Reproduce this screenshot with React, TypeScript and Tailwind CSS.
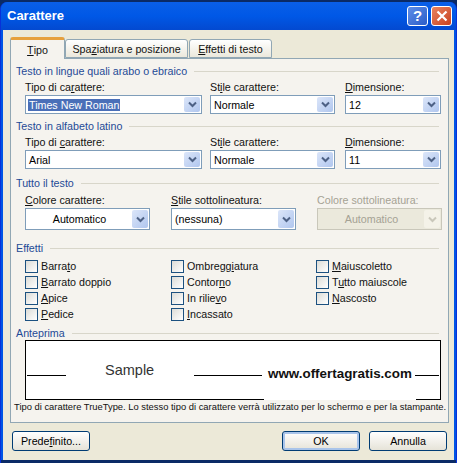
const font = { fontFamily: '"Liberation Sans", Arial, sans-serif' };

function Chevron({ disabled = false }: { disabled?: boolean }) {
  return (
    <div
      className={
        disabled
          ? "flex h-full w-[16px] items-center justify-center rounded-[2px] bg-[#f4f2e8]"
          : "flex h-full w-[16px] items-center justify-center rounded-[2px] bg-gradient-to-br from-[#dce6f9] to-[#b0c6ee]"
      }
    >
      <svg width="9" height="7" viewBox="0 0 9 7" fill="none">
        <path d="M1 1.5 L4.5 5 L8 1.5" stroke={disabled ? "#c9c7ba" : "#4d6185"} strokeWidth="2" />
      </svg>
    </div>
  );
}

function Combo({
  value,
  width,
  height = "h-[19px]",
  center = false,
  selected = false,
  disabled = false,
}: {
  value: string;
  width: string;
  height?: string;
  center?: boolean;
  selected?: boolean;
  disabled?: boolean;
}) {
  return (
    <div
      className={[
        "flex items-center border p-[1px]",
        width,
        height,
        disabled ? "border-[#c9c7ba] bg-[#ebe9dc] text-[#a5a294]" : "border-[#7f9db9] bg-white text-black",
      ].join(" ")}
    >
      <div className={center ? "flex-1 text-center" : "flex-1 pl-[1px]"}>
        <span className={selected ? "bg-[#4a6fb8] px-[1px] text-white" : "px-[1px]"}>{value}</span>
      </div>
      <Chevron disabled={disabled} />
    </div>
  );
}

function Header({ title }: { title: string }) {
  return (
    <div className="flex h-[14px] items-center gap-[7px] pl-[5px] pr-[9px] text-[#1e4a96]">
      <span className="shrink-0">{title}</span>
      <div className="h-[1px] flex-1 bg-[#d8d6ca]" />
    </div>
  );
}

function Field({
  label,
  width,
  className = "",
  children,
}: {
  label: React.ReactNode;
  width: string;
  className?: string;
  children: React.ReactNode;
}) {
  return (
    <div className={`flex shrink-0 flex-col ${width} ${className}`}>
      <div className="h-[15px] leading-[15px]">{label}</div>
      {children}
    </div>
  );
}

function Check({ label }: { label: React.ReactNode }) {
  return (
    <div className="flex h-[16px] items-center gap-[3px]">
      <div className="h-[13px] w-[13px] shrink-0 border border-[#1c5180] bg-gradient-to-br from-[#dcdcd7] to-white" />
      <span>{label}</span>
    </div>
  );
}

function Btn({ children, width, primary = false }: { children: React.ReactNode; width: string; primary?: boolean }) {
  return (
    <button
      type="button"
      className={[
        "h-[20px] rounded-[3px] border border-[#003c74] bg-gradient-to-b from-white to-[#e6e3d8] text-black",
        width,
        primary ? "shadow-[inset_0_0_0_2px_#a9c4ea]" : "",
      ].join(" ")}
    >
      {children}
    </button>
  );
}

export default function App() {
  return (
    <div className="h-[463px] w-[457px] overflow-hidden bg-[#0a2a66] pt-[2px] text-[10.7px] leading-[14px] text-[#111]" style={font}>
      <div className="flex h-[461px] flex-col rounded-t-[7px] border-x border-[#0831d9] bg-[#0055e5]">
        <div className="flex h-[28px] shrink-0 items-center rounded-t-[7px] bg-gradient-to-b from-[#0a5fe8] via-[#0058e6] to-[#0349d0] pl-[6px] pr-[4px]">
          <span className="flex-1 text-[13px] font-bold text-white">Carattere</span>
          <div className="flex items-center gap-[3px]">
            <div className="flex h-[20px] w-[21px] items-center justify-center rounded-[3px] border border-white bg-gradient-to-br from-[#5f8ee8] to-[#2a5cc9] text-[15px] font-bold text-white">
              ?
            </div>
            <div className="flex h-[20px] w-[21px] items-center justify-center rounded-[3px] border border-white bg-gradient-to-br from-[#e8825e] to-[#c8401e]">
              <svg width="12" height="12" viewBox="0 0 12 12" fill="none">
                <path d="M1.5 1.5 L10.5 10.5 M10.5 1.5 L1.5 10.5" stroke="white" strokeWidth="2.2" />
              </svg>
            </div>
          </div>
        </div>

        <div className="mx-[2px] flex flex-1 flex-col bg-[#ece9d8] px-[7px] pt-[7px]">
          <div className="flex h-[21px] items-end">
            <div className="z-10 -mb-[1px] flex h-[22px] w-[55px] items-center justify-center rounded-t-[3px] border-x border-[#91a7b4] border-t-[3px] border-t-[#e6a03c] bg-[#f5f3ee]">
              <u>T</u>ipo
            </div>
            <div className="flex h-[19px] w-[123px] items-center justify-center rounded-t-[3px] border border-[#91a7b4] bg-gradient-to-b from-white to-[#ebe8dc]">
              Spa<u>z</u>iatura e posizione
            </div>
            <div className="ml-[1px] flex h-[19px] w-[83px] items-center justify-center rounded-t-[3px] border border-[#91a7b4] bg-gradient-to-b from-white to-[#ebe8dc]">
              <u>E</u>ffetti di testo
            </div>
          </div>

          <div className="flex h-[365px] w-[439px] flex-col border border-[#91a7b4] bg-[#f5f3ee] pt-[5px]">
            <Header title="Testo in lingue quali arabo o ebraico" />
            <div className="mt-[2px] flex pl-[14px]">
              <Field width="w-[177px]" label={<>Tipo di ca<u>r</u>attere:</>}>
                <Combo value="Times New Roman" width="w-[177px]" selected />
              </Field>
              <Field width="w-[125px]" className="ml-[8px]" label={<>St<u>i</u>le carattere:</>}>
                <Combo value="Normale" width="w-[125px]" />
              </Field>
              <Field width="w-[96px]" className="ml-[10px]" label={<><u>D</u>imensione:</>}>
                <Combo value="12" width="w-[96px]" />
              </Field>
            </div>

            <div className="mt-[5px]">
              <Header title="Testo in alfabeto latino" />
            </div>
            <div className="mt-[2px] flex pl-[14px]">
              <Field width="w-[177px]" label={<>Tipo di <u>c</u>arattere:</>}>
                <Combo value="Arial" width="w-[177px]" />
              </Field>
              <Field width="w-[125px]" className="ml-[8px]" label={<>St<u>i</u>le carattere:</>}>
                <Combo value="Normale" width="w-[125px]" />
              </Field>
              <Field width="w-[96px]" className="ml-[10px]" label={<><u>D</u>imensione:</>}>
                <Combo value="11" width="w-[96px]" />
              </Field>
            </div>

            <div className="mt-[7px]">
              <Header title="Tutto il testo" />
            </div>
            <div className="mt-[3px] flex pl-[14px]">
              <Field width="w-[125px]" label={<><u>C</u>olore carattere:</>}>
                <Combo value="Automatico" width="w-[125px]" height="h-[22px]" center />
              </Field>
              <Field width="w-[125px]" className="ml-[21px]" label={<><u>S</u>tile sottolineatura:</>}>
                <Combo value="(nessuna)" width="w-[125px]" height="h-[22px]" />
              </Field>
              <Field width="w-[125px]" className="ml-[21px] text-[#a5a294]" label="Colore sottolineatura:">
                <Combo value="Automatico" width="w-[125px]" height="h-[22px]" center disabled />
              </Field>
            </div>

            <div className="mt-[11px]">
              <Header title="Effetti" />
            </div>
            <div className="mt-[3px] flex pl-[14px]">
              <div className="w-[146px]">
                <Check label={<>Barra<u>t</u>o</>} />
                <Check label={<><u>B</u>arrato doppio</>} />
                <Check label={<><u>A</u>pice</>} />
                <Check label={<><u>P</u>edice</>} />
              </div>
              <div className="w-[145px]">
                <Check label={<>Ombregg<u>i</u>atura</>} />
                <Check label={<>Contor<u>n</u>o</>} />
                <Check label={<>In rilie<u>v</u>o</>} />
                <Check label={<><u>I</u>ncassato</>} />
              </div>
              <div className="flex-1">
                <Check label={<><u>M</u>aiuscoletto</>} />
                <Check label={<>T<u>u</u>tto maiuscole</>} />
                <Check label={<><u>N</u>ascosto</>} />
              </div>
            </div>

            <div className="mt-[4px]">
              <Header title="Anteprima" />
            </div>
            <div className="relative ml-[14px] flex h-[60px] w-[416px] items-center border border-black bg-white">
              <div className="mt-[10px] ml-[1px] h-[1px] w-[39px] bg-black" />
              <span className="ml-[39px] w-[50px] shrink-0 text-[14.5px] leading-none text-[#333]">Sample</span>
              <div className="mt-[10px] ml-[39px] h-[1px] w-[68px] bg-black" />
              <div className="mt-[10px] ml-[153px] h-[1px] w-[24px] bg-black" />
              <div className="absolute -bottom-[1px] left-[238px] h-[24px] w-[152px] bg-white" />
              <span className="absolute left-[242px] top-[25px] whitespace-nowrap text-[13.4px] font-bold leading-[16px] text-[#111]">
                www.offertagratis.com
              </span>
            </div>
            <div className="-mt-[1px] h-[16px] whitespace-nowrap pl-[3px] text-[9.4px] leading-[16px]">
              Tipo di carattere TrueType. Lo stesso tipo di carattere verrà utilizzato per lo schermo e per la stampante.
            </div>
          </div>

          <div className="mt-[8px] flex items-center pl-[2px]">
            <Btn width="w-[78px]">Prede<u>f</u>inito...</Btn>
            <div className="flex-1" />
            <Btn width="w-[78px]" primary>OK</Btn>
            <div className="w-[9px]" />
            <Btn width="w-[78px]">Annulla</Btn>
          </div>
        </div>
        <div className="h-[3px] shrink-0 bg-[#0a2a66]" />
      </div>
    </div>
  );
}
